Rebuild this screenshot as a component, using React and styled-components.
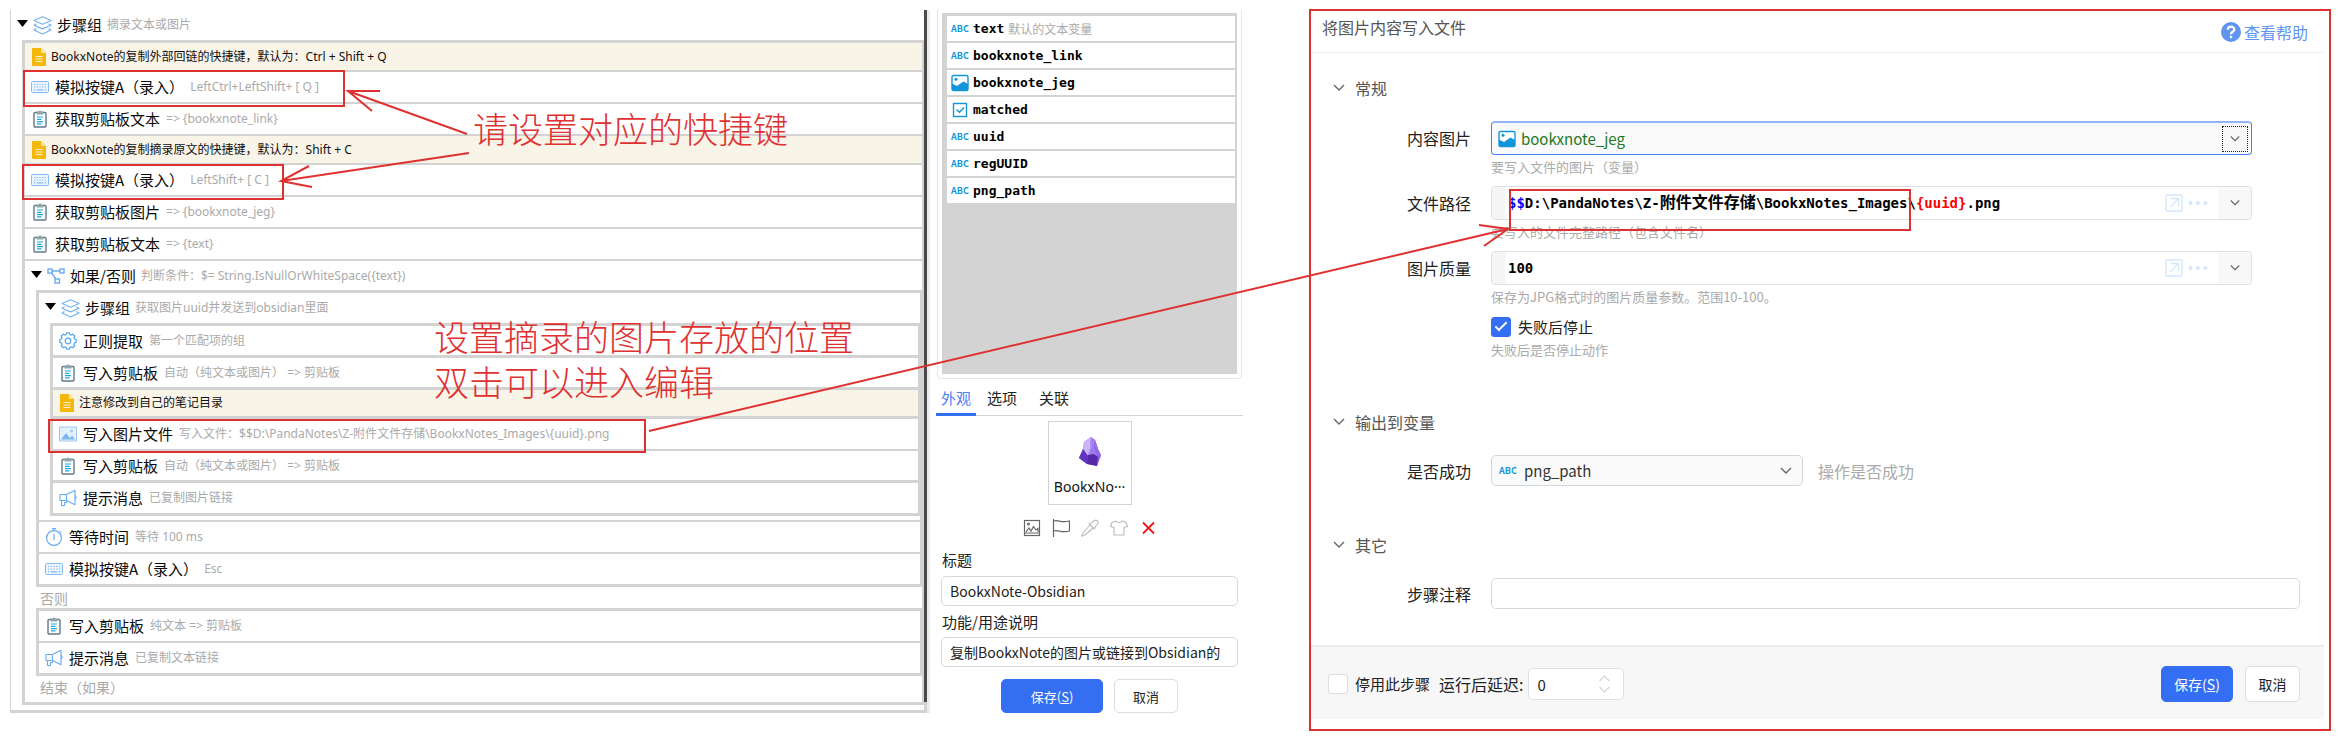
import React from "react";
import styled, { createGlobalStyle, css } from "styled-components";

const line = "#d3d3d3";
const accent = "#346ef3";
const red = "#e03131";
const sky = "#1296db";

const GlobalStyle = createGlobalStyle`
  *, *::before, *::after { box-sizing: border-box; }
  body {
    margin: 0;
    background: #fff;
    color: #111;
    font-family: "Noto Sans CJK SC", "Noto Sans", sans-serif;
    font-size: 15px;
  }
  button, input, select { font: inherit; color: inherit; margin: 0; }
  h1, h2, ul { margin: 0; padding: 0; font-weight: 400; list-style: none; }
`;

const Page = styled.div`
  position: relative;
  display: grid;
  grid-template-columns: minmax(0, 926fr) minmax(0, 373fr) minmax(0, 1022fr);
  align-items: start;
  padding: 9px 9px 9px 10px;
`;

/* ---------- step tree ---------- */

const StepPanel = styled.section`
  display: flex;
  margin: 1px 6px 0 0;
  border-left: 1px solid ${line};
`;

const StepTree = styled.div`
  flex: 1;
  min-width: 0;
  padding-bottom: 5px;
  border-bottom: 3px solid ${line};
`;

const ScrollTrack = styled.div`
  width: 6px;
  padding-bottom: 11px;
  background: linear-gradient(to right, ${line} 3px, #ececec 3px);
`;

const ScrollThumb = styled.div`
  width: 3px;
  height: 100%;
  background: #4a4a4a;
`;

const Group = styled.div`
  margin-left: 11px;
  border: 3px solid ${line};
  border-right-width: 2px;
`;

const Row = styled.div`
  display: flex;
  align-items: center;
  gap: 6px;
  height: ${(p) => (p.$last ? 30 : 32)}px;
  padding-left: 6px;
  border-bottom: ${(p) => (p.$last ? 0 : p.$thick ? 3 : 2)}px solid ${line};
  white-space: nowrap;
  line-height: 24px;
`;

const NoteRow = styled(Row)`
  height: 29px;
  padding-left: 7px;
  gap: 5px;
  background: #f9f4e8;
  font-family: "Noto Sans", "Noto Sans CJK SC", sans-serif;
  font-size: 12px;
`;

const HeadRow = styled(Row)`
  height: ${(p) => (p.$branch ? 29 : 30)}px;
  border: 0;
  gap: 5px;
`;

const Title = styled.span`
  font-size: 15px;
  color: #0a0a0a;
`;

const Detail = styled.span`
  font-family: "Noto Sans", "Noto Sans CJK SC", sans-serif;
  font-size: 12px;
  color: #aaa;
`;

const BranchLabel = styled.div`
  height: ${(p) => (p.$end ? 26 : 21)}px;
  padding-left: 15px;
  line-height: 22px;
  font-size: 14px;
  color: #aaa;
`;

const Spacer = styled.div`
  height: 6px;
  border-bottom: 2px solid ${line};
`;

const Icon = ({ size = 18, w, h, box = "0 0 18 18", children, ...rest }) => (
  <svg width={w || size} height={h || size} viewBox={box} fill="none" aria-hidden="true" {...rest}>
    {children}
  </svg>
);

const Triangle = () => (
  <Icon w={11} h={12} box="0 0 11 12"><path d="M0 1h11L5.500 8z" fill="#000" /></Icon>
);

const LayersIcon = () => (
  <Icon size={19} box="0 0 19 19" stroke="#74b3f3" strokeWidth="1.200" strokeLinejoin="round">
    <path d="M9.500.8 18 4.500 9.500 8.200 1 4.500z" />
    <path d="M3.500 7.800 1 9.200l8.500 3.700L18 9.200l-2.500-1.400" />
    <path d="M3.500 12.600 1 14l8.500 4L18 14l-2.500-1.400" />
  </Icon>
);

const NoteIcon = () => (
  <Icon w={14} h={18} box="0 0 14 18">
    <path d="M1 0h8l5 5v12a1 1 0 0 1-1 1H1a1 1 0 0 1-1-1V1a1 1 0 0 1 1-1z" fill="#f4b80a" />
    <path d="M9 0v5h5z" fill="#fbe19a" />
    <path d="M3.500 8.500h7M3.500 11h7M3.500 13.500h7" stroke="#fdf1cd" strokeWidth="1.200" />
  </Icon>
);

const KeyboardIcon = () => (
  <Icon>
    <rect x=".5" y="3.500" width="17" height="11" rx="1" fill="#eaf4fe" stroke="#86bbf2" />
    <path d="M3 6.500h12M3 9h12" stroke="#86bbf2" strokeWidth="1.200" strokeDasharray="1.300 1.400" />
    <path d="M3 11.800h1.500M6 11.800h6M13.500 11.800H15" stroke="#86bbf2" strokeWidth="1.200" />
  </Icon>
);

const ClipboardIcon = () => (
  <Icon>
    <rect x="3" y="2.500" width="12" height="14.500" rx="1" fill="#fff" stroke="#627a86" strokeWidth="1.400" />
    <path d="M5.500 1.500h2L9 .3l1.500 1.200h2v3h-7z" fill="#90a4ae" />
    <path d="M6 7h6M6 9.300h4.500M6 11.600h6M6 13.900h4.500" stroke="#19a8e8" strokeWidth="1.200" />
  </Icon>
);

const BranchIcon = () => (
  <Icon stroke="#6aaaf0" strokeWidth="1.400">
    <rect x="1" y="2" width="4" height="4" />
    <rect x="13" y="2" width="4" height="4" />
    <rect x="8" y="12" width="4.500" height="4" />
    <path d="M5 4h8M4.500 6 9 12" />
  </Icon>
);

const gearPath = (() => {
  const points = [];
  for (let i = 0; i < 8; i += 1) {
    [[-0.3, 6.7], [-0.17, 8.3], [0.17, 8.3], [0.3, 6.7]].forEach(([off, r]) => {
      const a = (i * Math.PI) / 4 + off;
      points.push(`${(9 + r * Math.cos(a)).toFixed(2)} ${(9 + r * Math.sin(a)).toFixed(2)}`);
    });
  }
  return `M${points.join("L")}Z`;
})();

const GearIcon = () => (
  <Icon stroke="#55a6ea" strokeWidth="1.200" strokeLinejoin="round">
    <path d={gearPath} />
    <circle cx="9" cy="9" r="2.800" />
  </Icon>
);

const PhotoIcon = () => (
  <Icon>
    <rect x=".5" y="2" width="17" height="14" fill="#e3f1fe" stroke="#9fc8f0" />
    <path d="M2 14.500 7 8l4 5 2-2.500 3 4z" fill="#7db6f0" />
    <circle cx="12.500" cy="6" r="1.500" fill="#9fc8f0" />
  </Icon>
);

const MegaphoneIcon = () => (
  <Icon stroke="#6aaaf0" strokeWidth="1.100" strokeLinejoin="round">
    <path d="M1 5.500h6.500v6H1z" />
    <path d="M7.500 5.500 16 1.200v14.600l-8.500-4.300" />
    <path d="M16 6.500c1.500.3 1.500 3.200 0 3.600" />
    <path d="M2.500 11.500v5h3v-3h2v-2" />
  </Icon>
);

const StopwatchIcon = () => (
  <Icon stroke="#6aaaf0" strokeWidth="1.200">
    <circle cx="9" cy="10" r="7.400" />
    <path d="M9 6v6M9 .5v2M7 .7h4M14.800 3.200l1.200 1.200" />
  </Icon>
);

const Step = ({ icon, title, detail, ...rest }) => (
  <Row {...rest}>
    {icon}
    <Title>{title}</Title>
    {detail && <Detail>{detail}</Detail>}
  </Row>
);

const GroupHead = ({ icon, title, detail, ...rest }) => (
  <HeadRow {...rest}>
    <Triangle />
    {icon}
    <Title>{title}</Title>
    <Detail>{detail}</Detail>
  </HeadRow>
);

const Note = ({ children, ...rest }) => (
  <NoteRow {...rest}>
    <NoteIcon />
    <span>{children}</span>
  </NoteRow>
);

const Steps = () => (
  <StepPanel>
    <StepTree>
      <GroupHead icon={<LayersIcon />} title="步骤组" detail="摘录文本或图片" />
      <Group>
        <Note>BookxNote的复制外部回链的快捷键，默认为：Ctrl + Shift + Q</Note>
        <Step icon={<KeyboardIcon />} title="模拟按键A（录入）" detail="LeftCtrl+LeftShift+ [ Q ]" />
        <Step icon={<ClipboardIcon />} title="获取剪贴板文本" detail="=> {bookxnote_link}" />
        <Note>BookxNote的复制摘录原文的快捷键，默认为：Shift + C</Note>
        <Step icon={<KeyboardIcon />} title="模拟按键A（录入）" detail="LeftShift+ [ C ]" />
        <Step icon={<ClipboardIcon />} title="获取剪贴板图片" detail="=> {bookxnote_jeg}" />
        <Step icon={<ClipboardIcon />} title="获取剪贴板文本" detail="=> {text}" />
        <GroupHead $branch icon={<BranchIcon />} title="如果/否则" detail="判断条件：$= String.IsNullOrWhiteSpace({text})" />
        <Group>
          <GroupHead icon={<LayersIcon />} title="步骤组" detail="获取图片uuid并发送到obsidian里面" />
          <Group>
            <Step $thick icon={<GearIcon />} title="正则提取" detail="第一个匹配项的组" />
            <Step $thick icon={<ClipboardIcon />} title="写入剪贴板" detail="自动（纯文本或图片） => 剪贴板" />
            <Note $thick>注意修改到自己的笔记目录</Note>
            <Step icon={<PhotoIcon />} title="写入图片文件" detail="写入文件：$$D:\PandaNotes\Z-附件文件存储\BookxNotes_Images\{uuid}.png" />
            <Step $thick icon={<ClipboardIcon />} title="写入剪贴板" detail="自动（纯文本或图片） => 剪贴板" />
            <Step $last icon={<MegaphoneIcon />} title="提示消息" detail="已复制图片链接" />
          </Group>
          <Spacer />
          <Step icon={<StopwatchIcon />} title="等待时间" detail="等待 100 ms" />
          <Step $last icon={<KeyboardIcon />} title="模拟按键A（录入）" detail="Esc" />
        </Group>
        <BranchLabel>否则</BranchLabel>
        <Group>
          <Step icon={<ClipboardIcon />} title="写入剪贴板" detail="纯文本 => 剪贴板" />
          <Step $last icon={<MegaphoneIcon />} title="提示消息" detail="已复制文本链接" />
        </Group>
        <BranchLabel $end>结束（如果）</BranchLabel>
      </Group>
    </StepTree>
    <ScrollTrack><ScrollThumb /></ScrollTrack>
  </StepPanel>
);

/* ---------- variables and appearance ---------- */

const SidePanel = styled.section`
  display: flex;
  flex-direction: column;
  margin: 1px 66px 0 0;
`;

const VariableFrame = styled.div`
  margin: 0 1px;
  padding: 3px 4px 4px;
  border: 1px solid #e0e7ee;
  border-top: 0;
  border-radius: 0 0 4px 4px;
`;

const VariableList = styled.ul`
  display: flex;
  flex-direction: column;
  gap: 2px;
  min-height: 361px;
  padding: 3px 2px 3px 5px;
  background: ${line};
`;

const Variable = styled.li`
  display: flex;
  align-items: center;
  gap: 4px;
  height: 25px;
  padding-left: 4px;
  background: #fff;
`;

const VariableName = styled.span`
  font: bold 13px/24px "DejaVu Sans Mono", monospace;
  color: #000;
`;

const VariableHint = styled.span`
  font-size: 12px;
  color: #aaa;
`;

const AbcTag = styled.span`
  flex: none;
  width: 18px;
  font: bold 9px/12px "Noto Sans CJK SC", sans-serif;
  color: ${sky};
`;

const ImageTag = () => (
  <Icon>
    <rect x="1" y="1.500" width="16" height="15" rx="1.500" fill="#fff" stroke={sky} strokeWidth="1.400" />
    <path d="M1 9.500 6 12l6.500-4.500L17 10v5a1.500 1.500 0 0 1-1.500 1.500h-13A1.500 1.500 0 0 1 1 15z" fill={sky} />
    <circle cx="5" cy="5.200" r="1.500" fill={sky} />
  </Icon>
);

const CheckTag = () => (
  <Icon stroke={sky} strokeWidth="1.400">
    <rect x="2.500" y="2.500" width="13" height="13" />
    <path d="m5.500 8.500 3 2.700 4.500-4.700" />
  </Icon>
);

const Tabs = styled.div`
  display: flex;
  height: 37px;
  border-bottom: 1px solid ${line};
`;

const Tab = styled.button`
  height: 37px;
  padding: 2px 5px 0;
  margin-right: 6px;
  border: 0;
  border-bottom: 3px solid ${(p) => (p.$active ? accent : "transparent")};
  background: none;
  color: ${(p) => (p.$active ? "#4a80f5" : "#222")};

  & + & + & { margin-left: 6px; }
`;

const PreviewCard = styled.div`
  display: flex;
  flex-direction: column;
  align-items: center;
  justify-content: space-between;
  align-self: center;
  width: 84px;
  height: 84px;
  margin-top: 5px;
  padding: 15px 0 5px;
  border: 1px solid ${line};
  font-family: "Noto Sans", "Noto Sans CJK SC", sans-serif;
  font-size: 14px;
  line-height: 24px;
`;

const GemIcon = () => (
  <Icon w={22} h={30} box="0 0 22 30">
    <path d="M12 0 16 3 19 12 22 18 18 29 8 27 0 21 4 12 5 5z" fill="#8a5fe0" />
    <path d="M12 0 5 5 4 12l5 7 2-8z" fill="#cbb5f7" />
    <path d="m12 0-1 11-2 8 2-1 2-8 1-8z" fill="#b291f2" />
    <path d="M12 0 16 3l3 9-1 7-6-1 1-8z" fill="#a27bee" />
    <path d="m16 3 3 9 3 6-3 2-4-8z" fill="#9468ea" />
    <path d="m4 12-4 9 8 6 1-8z" fill="#6233bd" />
    <path d="m9 18 6-1 4 3-1 9-10-2z" fill="#5429a8" />
    <path d="m19 20 3-2-4 11z" fill="#8d60e4" />
  </Icon>
);

const ToolRow = styled.div`
  display: flex;
  justify-content: center;
  gap: 11px;
  margin-top: 14px;
`;

const ToolButton = styled.button`
  display: flex;
  padding: 0;
  border: 0;
  background: none;
`;

const SideForm = styled.form`
  display: flex;
  flex-direction: column;
  padding: 0 5px;
  color: #222;
`;

const SideLabel = styled.label`
  margin: ${(p) => (p.$first ? 12 : 5)}px 0 ${(p) => (p.$first ? 5 : 4)}px 1px;
  line-height: 22px;
`;

const TextInput = styled.input`
  width: 100%;
  min-width: 0;
  height: ${(p) => (p.$wide ? 31 : 30)}px;
  padding: 0 7px 0 8px;
  border: 1px solid #d3dae1;
  border-radius: 5px;
  background: #fff;
  outline: 0;
  font-size: 14px;
`;

const Actions = styled.div`
  display: flex;
  justify-content: center;
  gap: ${(p) => p.$gap}px;
`;

const Button = styled.button`
  height: ${(p) => (p.$small ? 34 : 36)}px;
  width: ${(p) => p.$width}px;
  padding: 0;
  border: 1px solid ${(p) => (p.$primary ? accent : "#d9dfe5")};
  border-radius: 5px;
  background: ${(p) => (p.$primary ? accent : "#fff")};
  color: ${(p) => (p.$primary ? "#fff" : "#222")};
  font-size: ${(p) => (p.$small ? 13 : 14)}px;
`;

const SideActions = styled(Actions)`
  margin-top: 12px;
`;

const variables = [
  { name: "text", hint: "默认的文本变量" },
  { name: "bookxnote_link" },
  { name: "bookxnote_jeg", tag: <ImageTag /> },
  { name: "matched", tag: <CheckTag /> },
  { name: "uuid" },
  { name: "regUUID" },
  { name: "png_path" },
];

const Side = () => (
  <SidePanel>
    <VariableFrame>
      <VariableList>
        {variables.map((v) => (
          <Variable key={v.name}>
            {v.tag || <AbcTag>ABC</AbcTag>}
            <VariableName>{v.name}</VariableName>
            {v.hint && <VariableHint>{v.hint}</VariableHint>}
          </Variable>
        ))}
      </VariableList>
    </VariableFrame>
    <Tabs role="tablist">
      <Tab role="tab" aria-selected="true" $active>外观</Tab>
      <Tab role="tab" aria-selected="false">选项</Tab>
      <Tab role="tab" aria-selected="false">关联</Tab>
    </Tabs>
    <PreviewCard>
      <GemIcon />
      <span>BookxNo···</span>
    </PreviewCard>
    <ToolRow>
      <ToolButton aria-label="图片">
        <Icon stroke="#666" strokeWidth="1.200">
          <rect x="1.500" y="1.500" width="15" height="15" />
          <path d="m3 13 3-4 2 3 2.500-4.500L13 11l2-1.500V13M2 14h14" />
          <circle cx="5.500" cy="5" r="1" />
        </Icon>
      </ToolButton>
      <ToolButton aria-label="标志">
        <Icon stroke="#666" strokeWidth="1.200">
          <path d="M1.500 0v18M1.500 2c5-1.500 7 2 16 0v10c-9 2-11-1.500-16 0" />
        </Icon>
      </ToolButton>
      <ToolButton aria-label="取色">
        <Icon stroke="#bbb" strokeWidth="1.100" strokeLinejoin="round">
          <path d="m9 6-7 8-1.300 3.300L4 16l8-7M8 4.500 13.500 10l1-2.500 2.500-3c1-2.500-1.500-4-3.500-3l-3 2.500z" />
        </Icon>
      </ToolButton>
      <ToolButton aria-label="皮肤">
        <Icon stroke="#bbb" strokeWidth="1.100" strokeLinejoin="round">
          <path d="M6 2 2 3.500.5 7.500 4 8.500V16h10V8.500l3.500-1L16 3.500 12 2c-1 2-5 2-6 0z" />
        </Icon>
      </ToolButton>
      <ToolButton aria-label="删除">
        <Icon stroke="#f01414" strokeWidth="1.800"><path d="m4 3.500 11 11M15 3.500l-11 11" /></Icon>
      </ToolButton>
    </ToolRow>
    <SideForm onSubmit={(e) => e.preventDefault()}>
      <SideLabel $first htmlFor="title">标题</SideLabel>
      <TextInput id="title" defaultValue="BookxNote-Obsidian" />
      <SideLabel htmlFor="usage">功能/用途说明</SideLabel>
      <TextInput id="usage" defaultValue="复制BookxNote的图片或链接到Obsidian的" />
      <SideActions $gap={11}>
        <Button $primary $small $width={102}>保存(<u>S</u>)</Button>
        <Button type="button" $small $width={64}>取消</Button>
      </SideActions>
    </SideForm>
  </SidePanel>
);

/* ---------- step dialog ---------- */

const Dialog = styled.section`
  padding: 0 5px 10px 0;
  border: 2px solid ${red};
  font-size: 16px;
  color: #222;
`;

const DialogHead = styled.header`
  display: flex;
  justify-content: space-between;
  height: 42px;
  padding: 4px 16px 0 11px;
  border-bottom: 1px solid #efefef;
`;

const DialogTitle = styled.h1`
  font-size: 16px;
  line-height: 24px;
  color: #555;
`;

const HelpLink = styled.a`
  display: flex;
  align-items: center;
  gap: 3px;
  height: 34px;
  color: #5f94f0;
  text-decoration: none;
`;

const Section = styled.section`
  padding: ${(p) => p.$top}px 24px 0 22px;
`;

const SectionTitle = styled.h2`
  display: flex;
  align-items: center;
  gap: 10px;
  height: 24px;
  font-size: 16px;
  color: #555;
`;

const Field = styled.div`
  display: grid;
  grid-template-columns: 138px minmax(0, 1fr);
  column-gap: 20px;
  align-items: center;
  margin-top: ${(p) => p.$top}px;
  padding-right: ${(p) => (p.$inset ? 48 : 0)}px;
`;

const FieldLabel = styled.label`
  justify-self: end;
  line-height: 24px;
`;

const Help = styled.p`
  grid-column: 2;
  margin: 2px 0 0;
  font-size: 13px;
  line-height: 20px;
  color: #aaa;
`;

const Control = styled.div`
  display: flex;
  align-items: center;
  height: 34px;
  border: 1px solid ${(p) => (p.$focus ? "#4d80f3" : "#e0e0e0")};
  border-radius: 4px;
  background: #fff;
  overflow: hidden;
  ${(p) => p.$focus && css`
    padding: 0 3px 0 6px;
    gap: 5px;
    background: #fafafa;
    border-top: 2px solid #96b3f9;
  `}
`;

const Gutter = styled.span`
  width: 13px;
  height: 100%;
  background: #f5f5f5;
`;

const code = css`
  flex: 1;
  min-width: 0;
  padding: 0 0 0 3px;
  border: 0;
  outline: 0;
  background: none;
  font: bold 14px/24px "DejaVu Sans Mono", "Noto Sans CJK SC", monospace;
  color: #000;
  white-space: nowrap;
`;

const CodeInput = styled.input`${code}`;
const CodeEditor = styled.div`${code}`;
const Prefix = styled.span`color: #00f;`;
const Token = styled.span`color: #f00;`;
const Han = styled.span`font-size: 16px;`;

const PlainSelect = styled.select`
  flex: 1;
  min-width: 0;
  height: 100%;
  padding: 0;
  border: 0;
  outline: 0;
  appearance: none;
  background: none;
  font-size: 15px;
  color: ${(p) => (p.$green ? "#1e781e" : "#333")};
`;

const DropButton = styled.button`
  display: flex;
  align-items: center;
  justify-content: center;
  width: ${(p) => (p.$focus ? 26 : 33)}px;
  height: ${(p) => (p.$focus ? "26px" : "100%")};
  padding: 0;
  border: ${(p) => (p.$focus ? "1px dotted #222" : "0")};
  background: #f8f8f8;
`;

const FieldTools = styled.div`
  display: flex;
  align-items: center;
  gap: 5px;
  margin-right: 10px;
`;

const OutputRow = styled.div`
  display: flex;
  align-items: center;
  gap: 15px;
  color: #aaa;
`;

const OutputSelect = styled.div`
  display: flex;
  align-items: center;
  gap: 7px;
  width: 312px;
  height: 31px;
  padding: 0 10px 0 7px;
  border: 1px solid #d0d8df;
  border-radius: 5px;
  background: #fafafa;
`;

const CheckLabel = styled.label`
  display: flex;
  align-items: center;
  gap: 7px;
  font-size: 15px;
  line-height: 22px;
`;

const Checkbox = styled.input.attrs({ type: "checkbox" })`
  appearance: none;
  display: grid;
  place-items: center;
  width: 20px;
  height: 20px;
  border: 1px solid #d9dfe5;
  border-radius: 3px;
  background: #fff;

  &:checked { border-color: ${accent}; background: ${accent}; }
  &:checked::after {
    content: "";
    width: 12px;
    height: 6px;
    margin-bottom: 4px;
    border: solid #fff;
    border-width: 0 0 2px 2px;
    transform: rotate(-45deg);
  }
`;

const DialogFoot = styled.footer`
  display: flex;
  align-items: center;
  height: 74px;
  margin-top: 36px;
  padding: 2px 24px 0 17px;
  border-top: 2px solid #ececec;
  background: #f7f7f7;
`;

const DelayLabel = styled.label`
  margin: 0 5px 0 9px;
`;

const DelayBox = styled.div`
  display: flex;
  align-items: center;
  width: 96px;
  height: 32px;
  padding: 0 13px 0 8px;
  border: 1px solid #dde2e8;
  border-radius: 5px;
  background: #fff;
`;

const DelayInput = styled.input`
  flex: 1;
  min-width: 0;
  padding: 0;
  border: 0;
  outline: 0;
  font-size: 15px;
  appearance: textfield;
  &::-webkit-inner-spin-button { display: none; }
`;

const FootActions = styled(Actions)`
  margin-left: auto;
`;

const Chevron = ({ w = 10, color = "#666" }) => (
  <Icon w={w} h={8} box="0 0 12 8"><path d="m1 1 5 5 5-5" stroke={color} strokeWidth="1.400" /></Icon>
);

const Tools = () => (
  <FieldTools>
    <Icon stroke="#d3e8fb" strokeWidth="1.300">
      <rect x="1" y="1" width="16" height="16" rx="1" />
      <path d="M5 13 13 5M6 4.500h7.500V12" />
    </Icon>
    <Icon w={20} h={6} box="0 0 20 6">
      <g fill="#d3e8fb"><circle cx="2.500" cy="3" r="2" /><circle cx="10" cy="3" r="2" /><circle cx="17.500" cy="3" r="2" /></g>
    </Icon>
  </FieldTools>
);

const StepDialog = () => (
  <Dialog>
    <DialogHead>
      <DialogTitle>将图片内容写入文件</DialogTitle>
      <HelpLink href="#help">
        <Icon size={20} box="0 0 20 20">
          <circle cx="10" cy="10" r="10" fill="#5f94f0" />
          <path d="M6.800 7.800C6.800 3.500 13.300 3.700 13.300 7.500 13.300 9.800 10 9.800 10 12.200M10 13.800v2.400" stroke="#fff" strokeWidth="2.300" />
        </Icon>
        查看帮助
      </HelpLink>
    </DialogHead>
    <Section $top={23}>
      <SectionTitle><Chevron w={12} />常规</SectionTitle>
      <Field $inset $top={21}>
        <FieldLabel htmlFor="image">内容图片</FieldLabel>
        <Control $focus>
          <ImageTag />
          <PlainSelect id="image" $green><option>bookxnote_jeg</option></PlainSelect>
          <DropButton $focus aria-label="展开"><Chevron /></DropButton>
        </Control>
        <Help>要写入文件的图片（变量）</Help>
      </Field>
      <Field $inset $top={9}>
        <FieldLabel as="span" id="path-label">文件路径</FieldLabel>
        <Control>
          <Gutter />
          <CodeEditor role="textbox" aria-labelledby="path-label" contentEditable suppressContentEditableWarning>
            <Prefix>$$</Prefix>D:\PandaNotes\Z-<Han>附件文件存储</Han>\BookxNotes_Images\<Token>{"{uuid}"}</Token>.png
          </CodeEditor>
          <Tools />
          <DropButton aria-label="展开"><Chevron /></DropButton>
        </Control>
        <Help>要写入的文件完整路径（包含文件名）</Help>
      </Field>
      <Field $inset $top={9}>
        <FieldLabel htmlFor="quality">图片质量</FieldLabel>
        <Control>
          <Gutter />
          <CodeInput id="quality" defaultValue="100" />
          <Tools />
          <DropButton aria-label="展开"><Chevron /></DropButton>
        </Control>
        <Help>保存为JPG格式时的图片质量参数。范围10-100。</Help>
      </Field>
      <Field $inset $top={9}>
        <span />
        <CheckLabel><Checkbox defaultChecked />失败后停止</CheckLabel>
        <Help>失败后是否停止动作</Help>
      </Field>
    </Section>
    <Section $top={50}>
      <SectionTitle><Chevron w={12} />输出到变量</SectionTitle>
      <Field $top={21}>
        <FieldLabel htmlFor="output">是否成功</FieldLabel>
        <OutputRow>
          <OutputSelect>
            <AbcTag>ABC</AbcTag>
            <PlainSelect id="output"><option>png_path</option></PlainSelect>
            <Chevron w={12} />
          </OutputSelect>
          操作是否成功
        </OutputRow>
      </Field>
    </Section>
    <Section $top={47}>
      <SectionTitle><Chevron w={12} />其它</SectionTitle>
      <Field $top={21}>
        <FieldLabel htmlFor="comment">步骤注释</FieldLabel>
        <TextInput id="comment" $wide />
      </Field>
    </Section>
    <DialogFoot>
      <CheckLabel><Checkbox />停用此步骤</CheckLabel>
      <DelayLabel htmlFor="delay">运行后延迟:</DelayLabel>
      <DelayBox>
        <DelayInput id="delay" type="number" defaultValue="0" />
        <Icon w={11} h={18} box="0 0 11 18" stroke="#cfd5db" strokeWidth="1.200">
          <path d="m.5 6 5-5 5 5M.5 12l5 5 5-5" />
        </Icon>
      </DelayBox>
      <FootActions $gap={12}>
        <Button $primary $width={72}>保存(<u>S</u>)</Button>
        <Button $width={55}>取消</Button>
      </FootActions>
    </DialogFoot>
  </Dialog>
);

/* ---------- hand-drawn annotations over the panels ---------- */

const Marks = styled.svg`
  position: absolute;
  inset: 0;
  width: 100%;
  height: 100%;
  pointer-events: none;
`;

const Remark = styled.p`
  position: absolute;
  left: ${(p) => p.$x}px;
  top: ${(p) => p.$y}px;
  margin: 0;
  font-family: "Liberation Sans", "Noto Sans CJK SC", sans-serif;
  font-size: 35px;
  font-weight: 300;
  line-height: 45px;
  white-space: nowrap;
  color: ${red};
`;

export default function App() {
  return (
    <>
      <GlobalStyle />
      <Page>
        <Steps />
        <Side />
        <StepDialog />
        <Marks fill="none" stroke={red} strokeWidth="2" aria-hidden="true">
          <rect x="24" y="71" width="320" height="35" />
          <rect x="23" y="165" width="260" height="34" />
          <rect x="49" y="420" width="596" height="32" />
          <rect x="1510" y="190" width="400" height="40" />
          <path d="M467 134 348 91M380 91H348l24 20" />
          <path d="M469 153 281 181M309 166l-28 15 31 6" />
          <path d="M649 431 1508 229M1479 225l29 4-24 17" />
        </Marks>
        <Remark $x={473} $y={108}>请设置对应的快捷键</Remark>
        <Remark $x={434} $y={316}>设置摘录的图片存放的位置</Remark>
        <Remark $x={434} $y={361}>双击可以进入编辑</Remark>
      </Page>
    </>
  );
}
